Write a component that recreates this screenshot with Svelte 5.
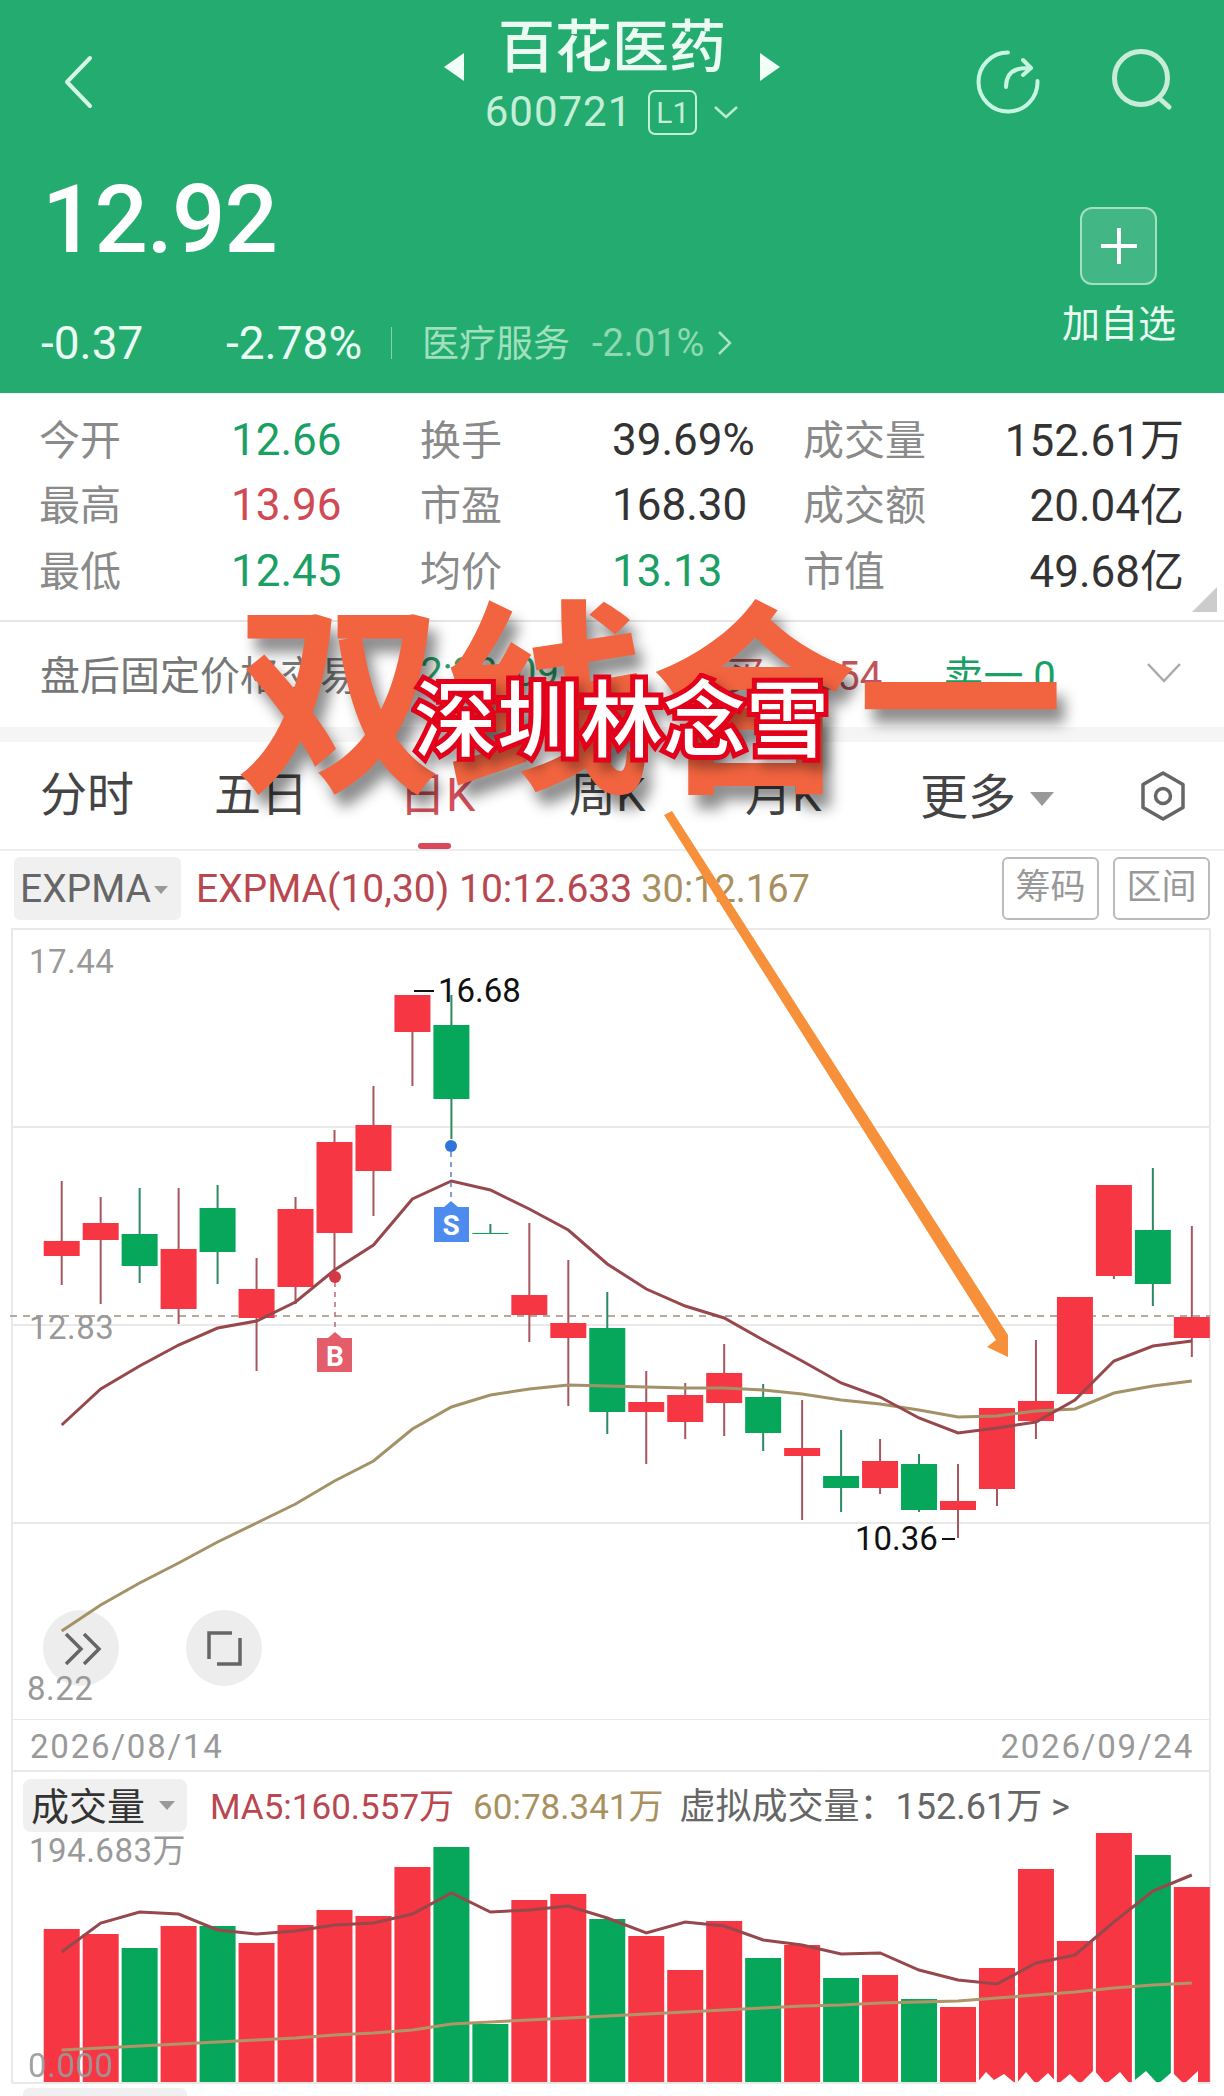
<script>
  // pixel data read off the chart: [colour, high, bodyTop, bodyBottom, low]
  const candles = [
    ['r', 1181, 1241, 1256, 1285], ['r', 1197, 1223, 1240, 1304], ['g', 1188, 1234, 1266, 1283],
    ['r', 1188, 1249, 1309, 1324], ['g', 1185, 1208, 1252, 1284], ['r', 1258, 1289, 1318, 1371],
    ['r', 1197, 1209, 1287, 1304], ['r', 1130, 1142, 1233, 1271], ['r', 1086, 1125, 1171, 1216],
    ['r', 995, 995, 1032, 1086], ['g', 995, 1025, 1099, 1139], ['g', 1224, 1233, 1234, 1234],
    ['r', 1223, 1295, 1315, 1342], ['r', 1260, 1323, 1338, 1406], ['g', 1292, 1328, 1412, 1434],
    ['r', 1371, 1402, 1412, 1464], ['r', 1383, 1395, 1422, 1439], ['r', 1344, 1373, 1403, 1436],
    ['g', 1384, 1397, 1433, 1451], ['r', 1400, 1448, 1456, 1520], ['g', 1430, 1476, 1488, 1512],
    ['r', 1439, 1461, 1488, 1494], ['g', 1454, 1464, 1510, 1512], ['r', 1464, 1501, 1510, 1538],
    ['r', 1408, 1408, 1489, 1506], ['r', 1340, 1401, 1421, 1439], ['r', 1297, 1297, 1394, 1394],
    ['r', 1185, 1185, 1276, 1279], ['g', 1168, 1230, 1284, 1306], ['r', 1226, 1317, 1338, 1357]
  ];
  const ema10 = [1425, 1389, 1366, 1345, 1328, 1321, 1302, 1270, 1245, 1199, 1181, 1190, 1209, 1230, 1264, 1289, 1306, 1318, 1340, 1361, 1383, 1397, 1418, 1433, 1428, 1422, 1400, 1361, 1346, 1341];
  const ema30 = [1631, 1605, 1583, 1563, 1542, 1523, 1504, 1481, 1461, 1429, 1407, 1395, 1389, 1385, 1386, 1387, 1388, 1388, 1390, 1394, 1400, 1404, 1410, 1417, 1416, 1411, 1409, 1393, 1386, 1381];

  const volumes = [
    ['r', 1929], ['r', 1934], ['g', 1948], ['r', 1926], ['g', 1926], ['r', 1943], ['r', 1925], ['r', 1910],
    ['r', 1916], ['r', 1867], ['g', 1847], ['g', 2024], ['r', 1900], ['r', 1894], ['g', 1919], ['r', 1936],
    ['r', 1970], ['r', 1921], ['g', 1958], ['r', 1945], ['g', 1978], ['r', 1975], ['g', 1999], ['r', 2007],
    ['r', 1968], ['r', 1869], ['r', 1941], ['r', 1833], ['g', 1855], ['r', 1887]
  ];
  const volMa5 = [1952, 1923, 1912, 1914, 1930, 1934, 1931, 1925, 1923, 1914, 1893, 1912, 1910, 1906, 1918, 1933, 1922, 1926, 1940, 1945, 1954, 1953, 1970, 1980, 1984, 1963, 1955, 1922, 1891, 1875];
  const volMa60 = [2050, 2048, 2046, 2044, 2042, 2040, 2038, 2035, 2033, 2030, 2024, 2022, 2020, 2018, 2016, 2014, 2012, 2010, 2008, 2006, 2005, 2003, 2002, 2001, 1998, 1995, 1992, 1988, 1985, 1983];

  const stats = [
    ['今开', '12.66', 'up', '换手', '39.69%', '', '成交量', '152.61万'],
    ['最高', '13.96', 'down', '市盈', '168.30', '', '成交额', '20.04亿'],
    ['最低', '12.45', 'up', '均价', '13.13', 'up', '市值', '49.68亿']
  ];
  const tabs = ['分时', '五日', '日K', '周K', '月K'];

  const xAt = (i) => 61.7 + i * 38.97;
  const pts = (ys) => ys.map((y, i) => `${xAt(i).toFixed(1)},${y}`).join(' ');
</script>

<div class="page">
  <header class="head">
    <div class="nav">
      <svg class="back" width="32" height="54" viewBox="0 0 32 54"><path d="M28 3 5 27l23 24" fill="none" stroke="#d5f5e5" stroke-width="4" stroke-linecap="round" stroke-linejoin="round"/></svg>
      <div class="title-block">
        <div class="title-row">
          <i class="tri tri-l"></i>
          <span class="title">百花医药</span>
          <i class="tri tri-r"></i>
        </div>
        <div class="code-row">
          <span>600721</span>
          <span class="level">L1</span>
          <svg width="26" height="14" viewBox="0 0 26 14"><path d="M2 2l11 10L24 2" fill="none" stroke="#b8ecd0" stroke-width="2.5"/></svg>
        </div>
      </div>
      <div class="nav-icons">
        <svg width="66" height="66" viewBox="0 0 66 66">
          <path d="M33 3.5A29.5 29.5 0 1 0 62.500 32" fill="none" stroke="#c6f6e1" stroke-width="4" stroke-linecap="round"/>
          <path d="M31 38c0-12 6-19 21-19M48 11l8 8-8 7" fill="none" stroke="#c6f6e1" stroke-width="4" stroke-linecap="round" stroke-linejoin="round"/>
        </svg>
        <svg width="62" height="64" viewBox="0 0 62 64">
          <circle cx="29" cy="29" r="26.500" fill="none" stroke="#c9ecd9" stroke-width="5"/>
          <path d="M47 49l10 9" stroke="#c9ecd9" stroke-width="5" stroke-linecap="round"/>
        </svg>
      </div>
    </div>

    <div class="quote">
      <div>
        <div class="price">12.92</div>
        <div class="change">
          <span class="chg-a">-0.37</span>
          <span class="chg-b">-2.78%</span>
          <i class="sep"></i>
          <span class="sector">医疗服务</span>
          <span class="sector-pct">-2.01%</span>
          <svg width="16" height="26" viewBox="0 0 16 26"><path d="M2 2l11 11L2 24" fill="none" stroke="#a6e3c3" stroke-width="2.500"/></svg>
        </div>
      </div>
      <div class="watch">
        <div class="add">
          <svg width="40" height="40" viewBox="0 0 40 40"><path d="M20 2v36M2 20h36" stroke="#fff" stroke-width="4"/></svg>
        </div>
        <span>加自选</span>
      </div>
    </div>
  </header>

  <section class="stats">
    {#each stats as row}
      <span class="lbl">{row[0]}</span>
      <span class="val {row[2]}">{row[1]}</span>
      <span class="lbl">{row[3]}</span>
      <span class="val {row[5]}">{row[4]}</span>
      <span class="lbl">{row[6]}</span>
      <span class="val last">{row[7]}</span>
    {/each}
    <i class="corner"></i>
  </section>

  <section class="after">
    <span class="after-title">盘后固定价格交易</span>
    <span class="after-time">2:30/09</span>
    <span class="after-buy">买一 554</span>
    <span class="after-sell">卖一 0</span>
    <svg width="34" height="20" viewBox="0 0 34 20"><path d="M1 1l16 17L33 1" fill="none" stroke="#aaa" stroke-width="2.500"/></svg>
  </section>

  <div class="band"></div>

  <nav class="tabs">
    {#each tabs as t, i}
      <span class="tab t{i}">{t}</span>
    {/each}
    <span class="more">更多</span>
    <i class="more-tri"></i>
    <svg class="hex" width="50" height="52" viewBox="0 0 50 52">
      <path d="M25 3 45 14.500v23L25 49 5 37.500v-23z" fill="none" stroke="#666" stroke-width="3.500" stroke-linejoin="round"/>
      <circle cx="25" cy="26" r="7.500" fill="none" stroke="#666" stroke-width="3.500"/>
    </svg>
    <i class="tab-line"></i>
  </nav>

  <div class="indicator">
    <div class="chip">EXPMA<i class="mini-tri"></i></div>
    <span class="ema-a">EXPMA(10,30) 10:12.633</span>
    <span class="ema-b">30:12.167</span>
    <div class="btns">
      <span class="btn">筹码</span>
      <span class="btn">区间</span>
    </div>
  </div>

  <svg class="kline" width="1224" height="792" viewBox="0 928 1224 792">
    <path d="M12 928V1720M1210 928V1720M12 929H1210M12 1127H1210M12 1325H1210M12 1523H1210M12 1720H1210" fill="none" stroke="#e9e9e9" stroke-width="2"/>
    <line x1="10" y1="1316" x2="1210" y2="1316" stroke="#b5aa9c" stroke-width="2" stroke-dasharray="7 6"/>

    <circle cx="81" cy="1648" r="38" fill="#ededed"/>
    <circle cx="224" cy="1648" r="38" fill="#ededed"/>
    <path d="M66 1634l15 15-15 15M84 1634l15 15-15 15" fill="none" stroke="#666" stroke-width="3.500"/>
    <path d="M209 1659v-26h23M240 1638v26h-23" fill="none" stroke="#666" stroke-width="3.500"/>

    {#each candles as c, i}
      <line x1={xAt(i)} x2={xAt(i)} y1={c[1]} y2={c[4]} stroke={c[0] === 'r' ? '#a8565e' : '#2c8a63'} stroke-width="2"/>
      <rect x={xAt(i) - 18} y={c[2]} width="36" height={c[3] - c[2]} fill={c[0] === 'r' ? '#f73644' : '#07a75b'}/>
    {/each}

    <polyline points={pts(ema30)} fill="none" stroke="#a39268" stroke-width="3"/>
    <polyline points={pts(ema10)} fill="none" stroke="#96484c" stroke-width="3"/>

    <!-- buy / sell markers -->
    <line x1="451" x2="451" y1="1152" y2="1202" stroke="#5a7fc0" stroke-width="1.500" stroke-dasharray="5 5"/>
    <circle cx="451" cy="1146" r="6" fill="#2f74d9"/>
    <path d="M434 1207h10l7-6 7 6h11v35h-35z" fill="#4d8cee"/>
    <text x="451" y="1235" class="tag">S</text>
    <line x1="335" x2="335" y1="1282" y2="1332" stroke="#c06a72" stroke-width="1.500" stroke-dasharray="5 5"/>
    <circle cx="335" cy="1277" r="6" fill="#d63744"/>
    <path d="M317 1338h11l7-6 7 6h10v34h-35z" fill="#e35d6a"/>
    <text x="335" y="1366" class="tag">B</text>

    <text x="29" y="973" class="axis">17.44</text>
    <text x="29" y="1339" class="axis">12.83</text>
    <text x="27" y="1700" class="axis">8.22</text>

    <line x1="414" x2="434" y1="991" y2="991" stroke="#111" stroke-width="2"/>
    <text x="438" y="1002" class="mark">16.68</text>
    <text x="855" y="1550" class="mark">10.36</text>
    <line x1="942" x2="955" y1="1539" y2="1539" stroke="#111" stroke-width="2"/>
  </svg>

  <div class="dates">
    <span>2026/08/14</span>
    <span>2026/09/24</span>
  </div>

  <div class="vol-head">
    <div class="vol-chip">成交量<i class="vol-tri"></i></div>
    <span class="ma5">MA5:160.557万</span>
    <span class="ma60">60:78.341万</span>
    <span class="virtual">虚拟成交量：152.61万 &gt;</span>
  </div>

  <svg class="volume" width="1224" height="264" viewBox="0 1832 1224 264">
    <path d="M12 1832V2083M1210 1832V2083M12 2083H1210" fill="none" stroke="#e9e9e9" stroke-width="2"/>
    {#each volumes as v, i}
      <rect x={xAt(i) - 18} y={v[1]} width="36" height={2082 - v[1]} fill={v[0] === 'r' ? '#f73644' : '#07a75b'}/>
    {/each}
    <polyline points={pts(volMa60)} fill="none" stroke="#b19568" stroke-width="3"/>
    <polyline points={pts(volMa5)} fill="none" stroke="#96484c" stroke-width="3"/>
    <text x="29" y="1862" class="axis">194.683万</text>
    <text x="28" y="2077" class="axis zero">0.000</text>
    <!-- smudged watermark along the foot of the last bars -->
    <path d="M976 2084l10-12 8 8 10-6 12 10 10-12 10 12 12-11 10 11 12-10 10 10 14-14 12 14 14-12 10 12 16-13 12 13 14-12 12 12 14-13v15z" fill="#fff"/>
    <path d="M23 2096v-2a6 6 0 0 1 6-6h152a6 6 0 0 1 6 6v2z" fill="#f0f0f0"/>
  </svg>

  <!-- caption and arrow pasted over the screenshot -->
  <div class="big">双线合一</div>
  <div class="stamp">深圳林念雪</div>
  <svg class="arrow" width="360" height="560" viewBox="660 805 360 560">
    <polygon points="664,815 672,811 1008,1335 1008,1357 987,1347 996,1340" fill="#f7903a"/>
  </svg>
</div>

<style>
  :global(body) {
    margin: 0;
    background: #fff;
  }
  .page {
    position: relative;
    width: 1224px;
    height: 2096px;
    overflow: hidden;
    background: #fff;
    font-family: Roboto, "Noto Sans CJK SC", sans-serif;
    color: #333;
  }
  i {
    display: block;
    font-style: normal;
  }

  .head {
    height: 393px;
    box-sizing: border-box;
    background: #24ab70;
    color: #fff;
  }
  .nav {
    display: grid;
    grid-template-columns: 1fr auto 1fr;
    height: 140px;
  }
  .back {
    margin: 55px 0 0 62px;
  }
  .title-block {
    display: flex;
    flex-direction: column;
    align-items: center;
    padding-top: 12px;
  }
  .title-row {
    display: flex;
    align-items: center;
    gap: 34px;
    height: 72px;
  }
  .title {
    font-size: 57px;
    line-height: 72px;
    font-weight: 500;
    color: #eafbf2;
  }
  .tri {
    width: 0;
    height: 0;
    margin-top: 37px;
    border-top: 14px solid transparent;
    border-bottom: 14px solid transparent;
  }
  .tri-l {
    border-right: 20px solid #f2fff8;
  }
  .tri-r {
    border-left: 20px solid #f2fff8;
  }
  .code-row {
    display: flex;
    align-items: center;
    gap: 16px;
    margin-top: 5px;
    font-size: 42px;
    line-height: 46px;
    color: #c4eed8;
    letter-spacing: 1px;
  }
  .level {
    box-sizing: border-box;
    width: 49px;
    height: 45px;
    border: 2px solid #c4eed8;
    border-radius: 7px;
    font-size: 30px;
    line-height: 41px;
    text-align: center;
    letter-spacing: 0;
  }
  .nav-icons {
    display: flex;
    justify-content: flex-end;
    gap: 71px;
    padding: 49px 50px 0 0;
    align-items: flex-start;
  }

  .quote {
    display: flex;
    justify-content: space-between;
    padding: 0 48px 0 41px;
  }
  .price {
    margin: 24px 0 0 1px;
    font-size: 94px;
    line-height: 112px;
    font-weight: 500;
    letter-spacing: -1px;
  }
  .change {
    display: flex;
    align-items: center;
    margin-top: 46px;
    height: 42px;
    font-size: 46px;
    color: #eafbf2;
  }
  .chg-a {
    width: 185px;
  }
  .chg-b {
    width: 165px;
  }
  .sep {
    width: 1px;
    height: 32px;
    background: #86d3ab;
    margin-right: 30px;
  }
  .sector {
    font-size: 37px;
    color: #9fe0bd;
    margin-bottom: 4px;
  }
  .sector-pct {
    margin: 0 13px 0 22px;
    font-size: 38px;
    color: #8ed9b1;
  }
  .watch {
    display: flex;
    flex-direction: column;
    align-items: center;
    margin-top: 67px;
  }
  .add {
    display: flex;
    align-items: center;
    justify-content: center;
    box-sizing: border-box;
    width: 77px;
    height: 78px;
    border: 2px solid #a4dfc0;
    border-radius: 12px;
    background: rgba(255, 255, 255, 0.14);
  }
  .watch span {
    margin-top: 16px;
    font-size: 38px;
    line-height: 46px;
    color: #eafbf2;
  }

  .stats {
    position: relative;
    display: grid;
    grid-template-columns: 192px 189px 192px 191px 1fr 1fr;
    grid-auto-rows: 65.500px;
    align-items: center;
    height: 229px;
    box-sizing: border-box;
    padding: 11px 40px 0 39px;
    border-bottom: 2px solid #e5e5e5;
  }
  .lbl {
    font-size: 41px;
    color: #8a8a8a;
  }
  .val {
    margin-top: 6px;
    font-size: 44px;
    color: #333;
  }
  .val.up {
    color: #1aa064;
  }
  .val.down {
    color: #cf4a52;
  }
  .val.last {
    margin-top: 0;
    text-align: right;
  }
  .corner {
    position: absolute;
    right: 7px;
    bottom: 8px;
    width: 0;
    height: 0;
    border-left: 25px solid transparent;
    border-bottom: 25px solid #ccc;
  }

  .after {
    display: flex;
    align-items: center;
    height: 105px;
    box-sizing: border-box;
    padding: 0 43px 4px 40px;
    font-size: 40px;
    color: #777;
  }
  .after-title {
    width: 381px;
  }
  .after-time {
    width: 305px;
    color: #2a9d68;
  }
  .after-buy {
    width: 219px;
    color: #c2555c;
  }
  .after-sell {
    width: 204px;
    color: #1aa064;
  }
  .band {
    height: 15px;
    background: #f5f5f5;
  }

  .tabs {
    position: relative;
    display: flex;
    align-items: center;
    height: 109px;
    box-sizing: border-box;
    border-bottom: 2px solid #ececec;
    font-size: 47px;
    color: #444;
  }
  .tab {
    position: absolute;
    top: 25px;
    line-height: 56px;
  }
  .t0 { left: 40px; }
  .t1 { left: 214px; }
  .t2 { left: 399px; color: #d2505a; }
  .t3 { left: 569px; }
  .t4 { left: 745px; }
  .more {
    margin: 0 0 5px 920px;
    font-size: 48px;
  }
  .more-tri {
    margin: 6px 0 0 14px;
    width: 0;
    height: 0;
    border-left: 12px solid transparent;
    border-right: 12px solid transparent;
    border-top: 14px solid #999;
  }
  .hex {
    margin-left: 84px;
  }
  .tab-line {
    position: absolute;
    left: 418px;
    bottom: 0;
    width: 33px;
    height: 6px;
    border-radius: 3px;
    background: #d9485a;
  }

  .indicator {
    display: flex;
    align-items: center;
    height: 77px;
    box-sizing: border-box;
    padding: 6px 14px 8px;
    font-size: 39px;
  }
  .chip {
    display: flex;
    align-items: center;
    box-sizing: border-box;
    width: 167px;
    height: 63px;
    padding-left: 6px;
    border-radius: 6px;
    background: #f0f0f0;
    color: #666;
    font-size: 39px;
    margin-right: 15px;
  }
  .mini-tri {
    margin: 3px 0 0 3px;
    width: 0;
    height: 0;
    border-left: 7px solid transparent;
    border-right: 7px solid transparent;
    border-top: 8px solid #999;
  }
  .ema-a {
    color: #b9474f;
    margin-right: 9px;
  }
  .ema-b {
    color: #a8915f;
    font-size: 38px;
  }
  .btns {
    display: flex;
    gap: 14px;
    margin-left: auto;
  }
  .btn {
    box-sizing: border-box;
    width: 97px;
    height: 63px;
    border: 2px solid #bbb;
    border-radius: 6px;
    text-align: center;
    font-size: 35px;
    line-height: 57px;
    color: #999;
  }

  .kline,
  .volume {
    display: block;
  }
  .axis {
    font-size: 33px;
    fill: #999;
    letter-spacing: 0.5px;
  }
  .zero {
    fill: #9a9a9a;
    opacity: 0.9;
  }
  .mark {
    font-size: 33px;
    fill: #111;
  }
  .tag {
    font-size: 28px;
    font-weight: 700;
    fill: #fff;
    text-anchor: middle;
  }

  .dates {
    display: flex;
    justify-content: space-between;
    height: 52px;
    box-sizing: border-box;
    margin: 0 13px 0 11px;
    padding: 7px 15px 0 17px;
    font-size: 33px;
    line-height: 40px;
    color: #999;
    letter-spacing: 1.8px;
    border: solid #e9e9e9;
    border-width: 0 2px 2px;
  }

  .vol-head {
    display: flex;
    align-items: center;
    height: 60px;
    box-sizing: border-box;
    margin: 0 13px 0 11px;
    padding: 6px 0 0 10px;
    border: solid #e9e9e9;
    border-width: 0 2px;
    font-size: 35px;
    white-space: nowrap;
  }
  .vol-chip {
    display: flex;
    align-items: center;
    box-sizing: border-box;
    width: 164px;
    height: 53px;
    margin-right: 23px;
    padding: 0 0 4px 8px;
    border-radius: 8px;
    background: #f0f0f0;
    font-size: 38px;
    color: #333;
  }
  .vol-tri {
    margin: 4px 0 0 14px;
    width: 0;
    height: 0;
    border-left: 8px solid transparent;
    border-right: 8px solid transparent;
    border-top: 9px solid #999;
  }
  .ma5 {
    color: #b9474f;
    margin: 0 19px 4px 0;
  }
  .ma60 {
    color: #a8915f;
    margin: 0 16px 4px 0;
  }
  .virtual {
    color: #666;
    font-size: 36px;
    margin-bottom: 4px;
  }

  .big {
    position: absolute;
    left: 236px;
    top: 602px;
    font-size: 207px;
    line-height: 207px;
    font-weight: 700;
    color: #f2643f;
    white-space: nowrap;
    text-shadow: 8px 14px 14px rgba(0, 0, 0, 0.45);
  }
  .stamp {
    position: absolute;
    left: 414px;
    top: 680px;
    font-size: 83px;
    line-height: 83px;
    font-weight: 500;
    color: #fff;
    white-space: nowrap;
    -webkit-text-stroke: 10px #e2001a;
    paint-order: stroke fill;
    filter: drop-shadow(6px 8px 6px rgba(0, 0, 0, 0.35));
  }
  .arrow {
    position: absolute;
    left: 660px;
    top: 805px;
  }
</style>
